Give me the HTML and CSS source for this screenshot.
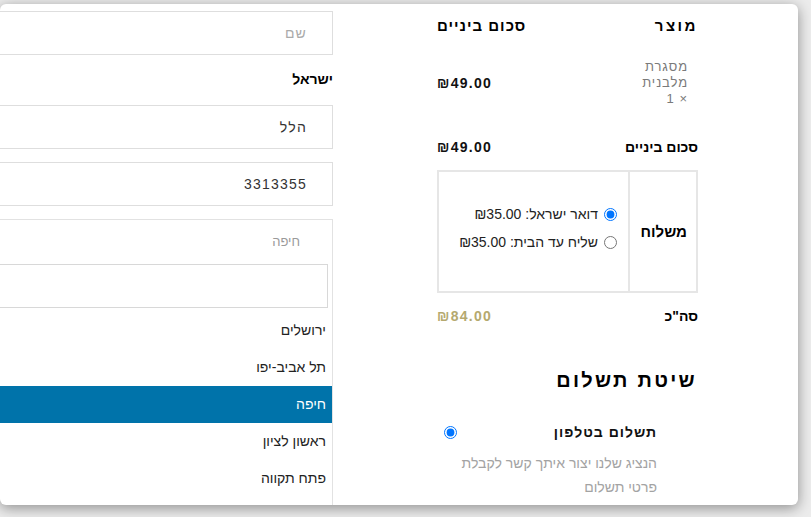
FILE: index.html
```html
<!DOCTYPE html>
<html lang="he" dir="rtl">
<head>
<meta charset="utf-8">
<title>תשלום</title>
<link rel="stylesheet" href="styles.css">
</head>
<body>
<div class="page">
  <div class="panel">
    <section class="review">
      <div class="row head">
        <span class="lbl">מוצר</span>
        <span class="val">סכום ביניים</span>
      </div>
      <div class="row item">
        <span class="prod">מסגרת מלבנית <span class="qty">×&nbsp;1</span></span>
        <span class="price">₪49.00</span>
      </div>
      <div class="row sub">
        <span class="lbl2">סכום ביניים</span>
        <span class="price">₪49.00</span>
      </div>
      <div class="ship">
        <div class="ship-h">משלוח</div>
        <div class="ship-opts">
          <label class="opt"><input type="radio" name="ship" checked><span>דואר ישראל: ₪35.00</span></label>
          <label class="opt"><input type="radio" name="ship"><span>שליח עד הבית: ₪35.00</span></label>
        </div>
      </div>
      <div class="row total">
        <span class="lbl2">סה"כ</span>
        <span class="price gold">₪84.00</span>
      </div>
      <h2 class="pay-title">שיטת תשלום</h2>
      <label class="pay-opt"><span class="pay-name">תשלום בטלפון</span><input type="radio" name="pay" checked></label>
      <p class="pay-desc">הנציג שלנו יצור איתך קשר לקבלת פרטי תשלום</p>
    </section>
    <section class="form">
      <div class="field ph">שם</div>
      <div class="country">ישראל</div>
      <div class="field">הלל</div>
      <div class="field">3313355</div>
      <div class="select">
        <div class="sel-cur">חיפה</div>
        <div class="sel-search"><div class="search-box"></div></div>
        <ul class="sel-list">
          <li>ירושלים</li>
          <li>תל אביב-יפו</li>
          <li class="hl">חיפה</li>
          <li>ראשון לציון</li>
          <li>פתח תקווה</li>
        </ul>
      </div>
    </section>
  </div>
</div>
</body>
</html>
```
FILE: styles.css
```css
* { box-sizing: border-box; }
html, body { margin: 0; padding: 0; }
body {
  background: #ececec;
  font-family: "Liberation Sans", Arial, sans-serif;
  font-size: 14px;
  color: #111;
  overflow: hidden;
}
.page { padding-top: 4px; width: 811px; height: 517px; }
.panel {
  width: 798px;
  height: 501px;
  margin-left: 0;
  margin-right: auto;
  background: #fff;
  border-radius: 6px;
  box-shadow: 0 3px 14px rgba(0,0,0,.4);
  overflow: hidden;
  display: flex;
  flex-direction: row;
  gap: 104px;
  padding-right: 100px;
}
.review { width: 261px; flex-shrink: 0; }
.row { display: flex; justify-content: space-between; align-items: center; }
.head { height: 42px; font-size: 15px; font-weight: bold; letter-spacing: 1px; color: #000; }
.head .lbl { letter-spacing: 2.5px; }
.item { height: 70px; padding-top: 3px; }
.prod {
  width: 46px;
  margin-right: 10px;
  color: #7a7a7a;
  font-size: 13px;
  line-height: 16px;
  letter-spacing: 0.9px;
}
.qty { letter-spacing: 1px; }
.price { font-weight: bold; letter-spacing: 1.3px; color: #111; }
.sub { height: 54px; padding-top: 8px; }
.lbl2 { font-weight: bold; color: #000; }
.gold { color: #b5a96f; }
.ship {
  height: 123px;
  border: 2px solid #e6e6e6;
  display: flex;
}
.ship-h {
  width: 68px;
  border-left: 2px solid #e6e6e6;
  display: flex;
  align-items: center;
  padding-right: 9px;
  font-weight: bold;
  font-size: 15px;
  color: #000;
}
.ship-opts {
  flex: 1;
  display: flex;
  flex-direction: column;
  justify-content: center;
  gap: 9px;
  padding-right: 11px;
  padding-bottom: 7px;
}
.opt { display: flex; align-items: center; gap: 6px; line-height: 19px; color: #222; }
.opt input, .pay-opt input { margin: 0; width: 13px; height: 13px; }
.total { height: 46px; }
.pay-title {
  margin: 26px 0 0;
  padding-right: 1px;
  font-size: 20px;
  line-height: 30px;
  letter-spacing: 2.3px;
  font-weight: bold;
  color: #000;
}
.pay-opt {
  margin-top: 22px;
  height: 30px;
  display: flex;
  justify-content: space-between;
  align-items: center;
  padding-right: 41px;
  padding-left: 7px;
}
.pay-name { font-weight: bold; letter-spacing: 1px; color: #111; }
.pay-desc {
  margin: 4px 41px 0 0;
  width: 200px;
  color: #a3a3a3;
  line-height: 24px;
}
.form { width: 333px; flex-shrink: 0; padding-top: 7px; }
.field {
  width: 420px;
  height: 44px;
  border: 1px solid #dedede;
  padding-right: 25px;
  display: flex;
  align-items: center;
  letter-spacing: 1.2px;
  color: #333;
}
.field.ph { color: #aaa; }
.country { margin-top: 14px; line-height: 20px; height: 20px; font-weight: bold; color: #000; }
.country + .field { margin-top: 16px; }
.field + .field { margin-top: 13px; }
.select {
  margin-top: 13px;
  width: 420px;
  height: 300px;
  border-top: 1px solid #e2e2e2;
  border-right: 1px solid #e2e2e2;
}
.sel-cur {
  padding: 13px 32px 9px 0;
  line-height: 18px;
  font-size: 13px;
  color: #9a9a9a;
}
.sel-search { padding: 4px 4px 4px 0; }
.search-box { height: 44px; border: 1px solid #d8d8d8; }
.sel-list { list-style: none; margin: 0; padding: 0; }
.sel-list li {
  height: 37px;
  line-height: 37px;
  padding-right: 6px;
  color: #222;
}
.sel-list li.hl { background: #0073aa; color: #fff; }
```
